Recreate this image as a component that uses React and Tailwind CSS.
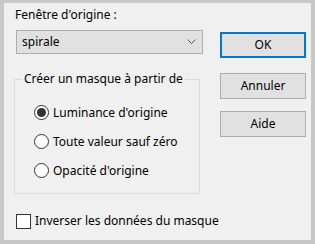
export default function App() {
  const font = { fontFamily: '"Noto Sans", "Segoe UI", sans-serif' };

  function Radio({ checked, label }) {
    return (
      <div className="flex h-[29px] items-center">
        <span className="flex h-[15px] w-[15px] items-center justify-center rounded-full border border-[#333] bg-white">
          {checked && <span className="h-[9px] w-[9px] rounded-full bg-[#333]" />}
        </span>
        <span className="ml-[4px] whitespace-nowrap text-[12px] text-black">{label}</span>
      </div>
    );
  }

  return (
    <div className="h-[244px] w-[315px] bg-[#c8c8c8] pb-[4px] pl-[4px] pr-[4px] pt-[3px]" style={font}>
      <div className="flex h-full w-full bg-[#f0f0f0]">
        <div className="flex w-[200px] flex-col pl-[10px]">
          <p className="ml-[1px] mt-[3px] h-[17px] whitespace-nowrap text-[12px] leading-[17px] text-black">Fenêtre d'origine :</p>
          <div className="ml-[2px] mt-[7px] flex h-[24px] w-[187px] items-center justify-between border border-[#adadad] bg-[#e1e1e1] pl-[5px] pr-[6px]">
            <span className="text-[12px] text-black">spirale</span>
            <svg width="9" height="6" viewBox="0 0 9 6" fill="none" stroke="#555" strokeWidth="1">
              <path d="M0.5 0.5 L4.5 4.5 L8.5 0.5" />
            </svg>
          </div>
          <fieldset className="mt-[17px] w-[186px] border border-[#dcdcdc] pb-[8px] pl-[19px]">
            <legend className="ml-[-12px] whitespace-nowrap px-[2px] text-[12px] leading-[16px] text-black">Créer un masque à partir de</legend>
            <div className="mt-[11px] flex flex-col">
              <Radio checked label="Luminance d'origine" />
              <Radio label="Toute valeur sauf zéro" />
              <Radio label="Opacité d'origine" />
            </div>
          </fieldset>
          <div className="mt-[18px] flex w-[260px] items-center">
            <span className="ml-[2px] h-[15px] w-[15px] shrink-0 border border-[#333] bg-white" />
            <span className="ml-[4px] whitespace-nowrap text-[12px] text-black">Inverser les données du masque</span>
          </div>
        </div>
        <div className="ml-[16px] flex flex-col pt-[29px]">
          <button className="h-[26px] w-[86px] border-2 border-[#0078d7] bg-[#e1e1e1] text-[12px] text-black">OK</button>
          <button className="mt-[15px] h-[26px] w-[86px] border border-[#adadad] bg-[#e1e1e1] text-[12px] text-black">Annuler</button>
          <button className="mt-[12px] h-[26px] w-[86px] border border-[#adadad] bg-[#e1e1e1] text-[12px] text-black">Aide</button>
        </div>
      </div>
    </div>
  );
}
